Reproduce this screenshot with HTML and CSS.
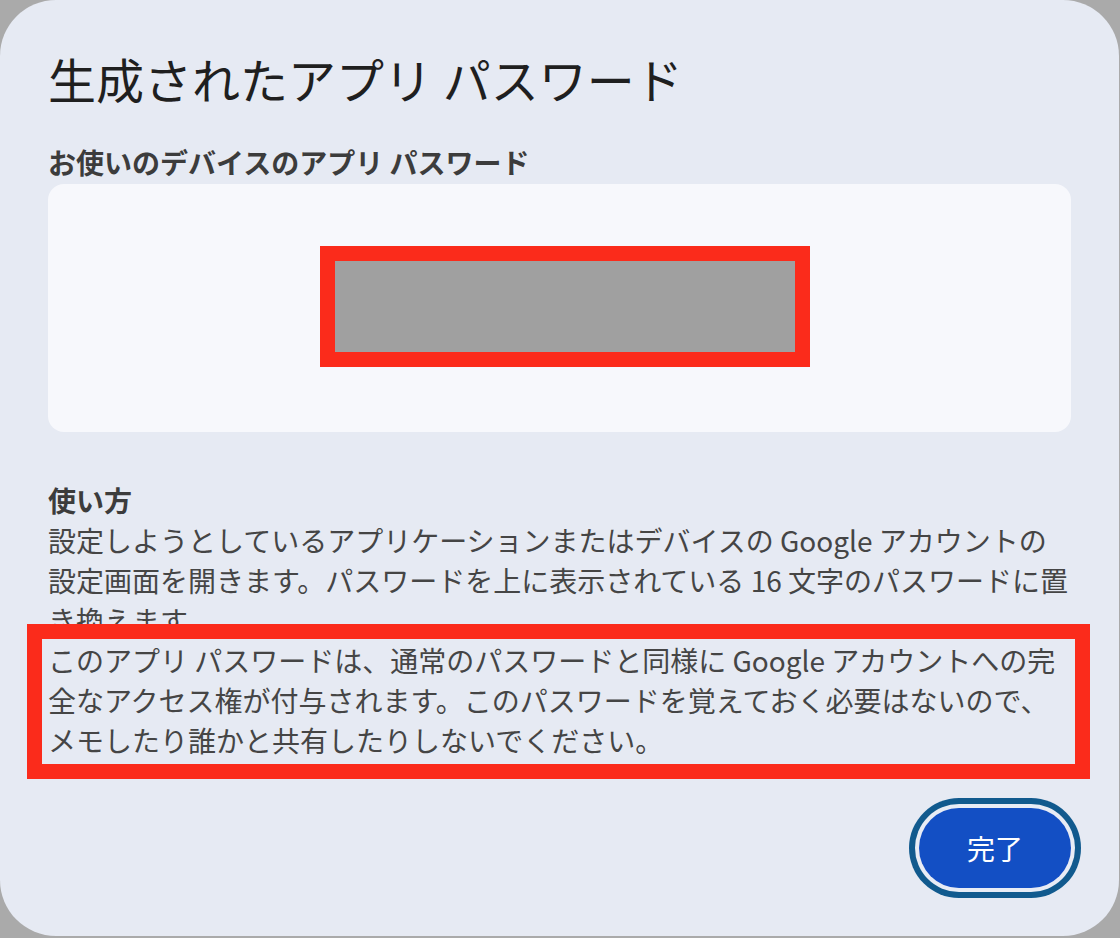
FILE: index.html
```html
<!DOCTYPE html>
<html lang="ja">
<head>
    <meta charset="UTF-8">
    <meta name="viewport" content="width=device-width, initial-scale=1.0">
    <title>生成されたアプリ パスワード</title>
    <link rel="stylesheet" href="styles.css">
</head>

<body>
    <div class="dialog">
        <h1 class="title">生成されたアプリ パスワード</h1>

        <h2 class="label">お使いのデバイスのアプリ パスワード</h2>
        <div class="password-box">
            <!-- password hidden -->
            <div class="redacted"></div>
        </div>

        <h2 class="label how-to">使い方</h2>
        <p class="text">設定しようとしているアプリケーションまたはデバイスの Google アカウントの設定画面を開きます。パスワードを上に表示されている 16 文字のパスワードに置き換えます。</p>

        <div class="note">
            <p class="text">このアプリ パスワードは、通常のパスワードと同様に Google アカウントへの完全なアクセス権が付与されます。このパスワードを覚えておく必要はないので、メモしたり誰かと共有したりしないでください。</p>
            <span class="mark"></span>
        </div>

        <div class="actions">
            <button class="done" type="button">完了</button>
        </div>
    </div>
</body>
</html>
```

FILE: styles.css
```css
body {
    margin: 0;
    background-color: #aaaaaa;
    font-family: "Noto Sans CJK JP", "Noto Sans", sans-serif;
}

.dialog {
    width: 1119px;
    height: 936px;
    box-sizing: border-box;
    padding: 50px 48px 0 48px;
    background: #e6eaf3;
    border-radius: 56px;
}

.title {
    margin: 0;
    font-size: 48px;
    font-weight: 400;
    line-height: 56px;
    color: #1f1f1f;
}

.label {
    margin: 36px 0 0 0;
    font-size: 28px;
    font-weight: 700;
    line-height: 40px;
    color: #3c3c3c;
}

.label.how-to {
    margin-top: 48px;
}

.password-box {
    height: 248px;
    margin-top: 2px;
    background: #f7f8fc;
    border-radius: 16px;
    display: flex;
    align-items: center;
    justify-content: center;
}

.redacted {
    width: 460px;
    height: 91px;
    margin: 0 0 3px 10px;
    border: 15px solid #fb2b1b;
    background: #a0a0a0;
}

.text {
    margin: 0;
    max-width: 1022px;
    font-size: 28px;
    line-height: 40px;
    color: #454545;
}

.note {
    position: relative;
}

.note .mark {
    position: absolute;
    top: -16px;
    right: -19px;
    bottom: -19px;
    left: -21px;
    border: 15px solid #fb2b1b;
}

.actions {
    display: flex;
    justify-content: flex-end;
    margin-top: 48px;
}

.done {
    width: 152px;
    height: 80px;
    border: none;
    border-radius: 40px;
    background: #134fc4;
    color: #fff;
    font-family: inherit;
    font-size: 28px;
    box-shadow: 0 0 0 4px #e8ecf5, 0 0 0 10px #115a8e;
    cursor: pointer;
}
```
